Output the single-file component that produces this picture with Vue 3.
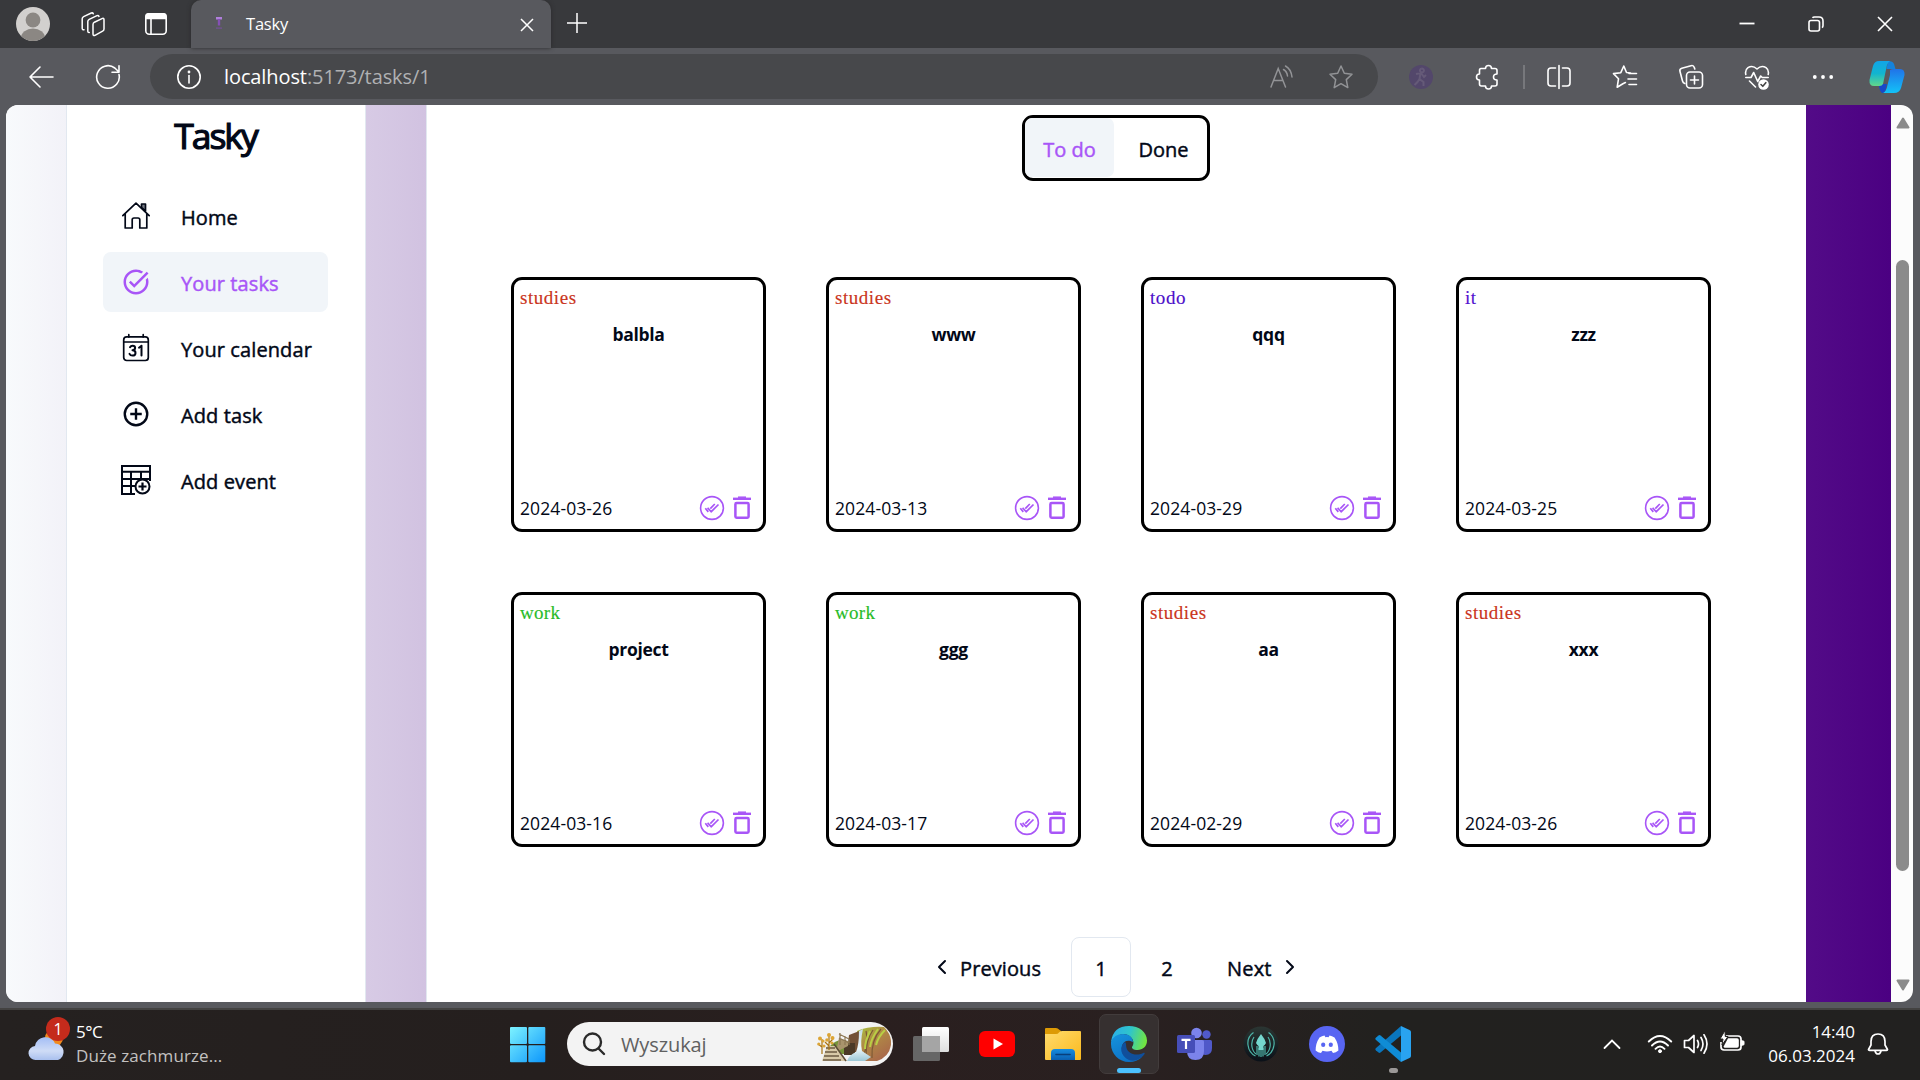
<script setup>
const nav = [
  { id: 'home', label: 'Home' },
  { id: 'tasks', label: 'Your tasks', active: true },
  { id: 'calendar', label: 'Your calendar' },
  { id: 'add', label: 'Add task' },
  { id: 'event', label: 'Add event' },
]

const tasks = [
  { category: 'studies', title: 'balbla', date: '2024-03-26' },
  { category: 'studies', title: 'www', date: '2024-03-13' },
  { category: 'todo', title: 'qqq', date: '2024-03-29' },
  { category: 'it', title: 'zzz', date: '2024-03-25' },
  { category: 'work', title: 'project', date: '2024-03-16' },
  { category: 'work', title: 'ggg', date: '2024-03-17' },
  { category: 'studies', title: 'aa', date: '2024-02-29' },
  { category: 'studies', title: 'xxx', date: '2024-03-26' },
]
</script>

<template>
  <div class="screen">
    <header class="tabstrip">
      <div class="strip-left">
        <svg class="avatar" width="34" height="34" viewBox="0 0 34 34">
          <defs><clipPath id="av"><circle cx="17" cy="17" r="17" /></clipPath></defs>
          <g clip-path="url(#av)">
            <rect width="34" height="34" fill="#d2d0ce" />
            <circle cx="17" cy="13" r="7.4" fill="#8b8783" />
            <ellipse cx="17" cy="31" rx="12" ry="9.5" fill="#8b8783" />
          </g>
        </svg>
        <svg class="workspaces" width="26" height="26" viewBox="0 0 26 26" fill="none" stroke="#fff" stroke-width="1.5" stroke-linejoin="round" stroke-linecap="round">
          <path d="M14.4 11.2 22 7.6q2-.8 2 1.2V18q0 1.5-1.400 2.200L15 24.300q-2 .8-2-1.200V13.500q0-1.600 1.400-2.300z" />
          <path d="M9.300 21.500q-1.500.3-1.500-1.500V10.500q0-1.500 1.400-2.200L17 4.600q1.500-.5 2 .8" />
          <path d="M4 18.800q-1.800.2-1.800-1.600V7.800q0-1.500 1.400-2.200L11.300 2q1.500-.5 2 .8" />
        </svg>
        <svg class="tabmenu" width="24" height="24" viewBox="0 0 24 24" fill="none" stroke="#fff" stroke-width="1.6">
          <rect x="1.800" y="1.800" width="20.400" height="20.400" rx="3.500" />
          <path d="M2 4q0-2.200 2.500-2.200h15Q22 1.800 22 4v2.500H2z" fill="#fff" />
          <path d="M7 7v15" />
        </svg>
      </div>
      <div class="tab">
        <svg class="favicon" width="8" height="14" viewBox="0 0 8 14">
          <path d="M1 1h6v2.500H1z" fill="#b07fdc" /><path d="M2.800 3h2.400v6.500H2.800z" fill="#8550b5" /><path d="M1 11.500h6v1.200H1z" fill="#76509a" />
        </svg>
        <span class="tab-title">Tasky</span>
        <svg class="tab-close" width="14" height="14" viewBox="0 0 14 14" stroke="#fff" stroke-width="1.500"><path d="M1 1l12 12M13 1L1 13" /></svg>
      </div>
      <svg class="newtab" width="22" height="22" viewBox="0 0 22 22" stroke="#fff" stroke-width="1.500"><path d="M11 1v20M1 11h20" /></svg>
      <div class="window-buttons">
        <svg width="16" height="16" viewBox="0 0 16 16" stroke="#fff" stroke-width="1.800"><path d="M.500 7.500h15" /></svg>
        <svg width="16" height="16" viewBox="0 0 16 16" fill="none" stroke="#fff" stroke-width="1.600"><rect x="1" y="4.500" width="10.500" height="10.500" rx="2" /><path d="M4.500 1.800Q5 1 6.500 1H11q4 0 4 4v4.500q0 1.500-1 2.200" /></svg>
        <svg width="16" height="16" viewBox="0 0 16 16" stroke="#fff" stroke-width="1.600"><path d="M1 1l14 14M15 1L1 15" /></svg>
      </div>
    </header>

    <div class="toolbar">
      <svg class="back" width="26" height="24" viewBox="0 0 26 24" fill="none" stroke="#fff" stroke-width="1.600" stroke-linecap="round" stroke-linejoin="round"><path d="M25 12H2M12 2L2 12l10 10" /></svg>
      <svg class="reload" width="26" height="26" viewBox="0 0 26 26" fill="none" stroke="#fff" stroke-width="1.600" stroke-linecap="round" stroke-linejoin="round"><path d="M24 10.500A11.300 11.300 0 1 1 19.800 4L23.500 7.500M24 1.800v6.500h-7" /></svg>
      <div class="address">
        <svg class="info" width="26" height="26" viewBox="0 0 26 26" fill="none" stroke="#fff" stroke-width="1.600"><circle cx="13" cy="13" r="11.200" /><path d="M13 11.500V19" stroke-linecap="round" /><circle cx="13" cy="8" r=".6" fill="#fff" /></svg>
        <span class="url"><b>localhost</b>:5173/tasks/1</span>
        <svg class="read" width="26" height="26" viewBox="0 0 26 26" fill="none" stroke="#929396" stroke-width="1.500" stroke-linecap="round"><path d="M2 23L9.200 4.500 16.500 23M4.700 16.500h9.200M14.500 5.500q3.500 2 4 6.500M16.500 2q5.500 3 6.500 11" /></svg>
        <svg class="star" width="26" height="26" viewBox="0 0 26 26" fill="none" stroke="#929396" stroke-width="1.500" stroke-linejoin="round"><path d="M13 2l3.300 7.300 7.700.9-5.700 5.400 1.500 8L13 19.700l-6.800 3.900 1.500-8L2 10.200l7.700-.9z" /></svg>
      </div>
      <div class="tools">
        <svg width="26" height="26" viewBox="0 0 26 26"><circle cx="13" cy="13" r="12" fill="#53476b" /><path d="M14 4.500a2 2 0 1 1-.1 0M8 10l5-1 3 4 2-2M12.500 9l-1 6 4 3v4M11.500 15l-2 3-3 3" stroke="#655a78" stroke-width="2" fill="none" /></svg>
        <svg class="puzzle" width="26" height="26" viewBox="0 0 26 26" fill="none" stroke="#fff" stroke-width="1.600" stroke-linejoin="round"><path d="M6 4.500h4.500q0-3 3-3t3 3H20q2 0 2 2V10q-3.500 0-3.500 3t3.500 3v4q0 2-2 2h-3.500q0 3-3 3t-3-3H6.500q-2 0-2-2v-4Q1.500 16 1.500 13t3-3V6.500q0-2 1.500-2z" /></svg>
        <i class="divider"></i>
        <svg width="26" height="26" viewBox="0 0 26 26" fill="none" stroke="#fff" stroke-width="1.600" stroke-linecap="round"><path d="M13 1.500v23M9.500 4H5Q2 4 2 7v12q0 3 3 3h4.500M16.500 4H21q3 0 3 3v12q0 3-3 3h-4.500" /></svg>
        <svg width="26" height="26" viewBox="0 0 26 26" fill="none" stroke="#fff" stroke-width="1.600" stroke-linecap="round" stroke-linejoin="round"><path d="M18.500 9l-4-.5L11.800 2 8.800 8.700 1.500 9.600l5 5.200-1.300 8.400 5.700-3.500 2.500-1.200M17 9.500h7.500M16 15h8.500M17 20.500h7.500" /></svg>
        <svg width="26" height="26" viewBox="0 0 26 26" fill="none" stroke="#fff" stroke-width="1.600" stroke-linecap="round" stroke-linejoin="round"><rect x="8.500" y="8" width="16" height="16" rx="3.500" /><path d="M16.500 12v8M12.500 16h8M6.800 19.500Q5 19 4.500 17L2 7.500Q1.300 5 3.800 4.200L13 1.700q2.500-.7 3.300 1.800l.5 1.500" /></svg>
        <svg width="26" height="26" viewBox="0 0 26 26" fill="none" stroke="#fff" stroke-width="1.600" stroke-linecap="round" stroke-linejoin="round"><path d="M1.800 10.500Q.8 6 4 3.700q4.500-3 9 1.300 4.500-4.300 9-1.300Q25.200 6 24.200 10.500M1.800 13.500H7l2.700-5 4 9 3-5.500 1.500 1.500h6M5.500 17l6 6" /><circle cx="19.500" cy="20.500" r="5.300" fill="#fff" stroke="none" /><path d="M17 20.500l1.800 1.800 3-3.600" stroke="#444" /></svg>
        <svg width="26" height="26" viewBox="0 0 26 26" fill="#fff"><circle cx="4.800" cy="13" r="1.900" /><circle cx="13" cy="13" r="1.900" /><circle cx="21.200" cy="13" r="1.900" /></svg>
        <svg class="copilot" width="36" height="34" viewBox="0 0 36 34">
          <defs>
            <linearGradient id="cp1" x1="0" y1="0" x2="0" y2="1"><stop offset="0" stop-color="#11a5e8" /><stop offset=".5" stop-color="#12b5cf" /><stop offset="1" stop-color="#62d78a" /></linearGradient>
            <linearGradient id="cp2" x1="0" y1="0" x2="0" y2="1"><stop offset="0" stop-color="#2173e8" /><stop offset="1" stop-color="#12c2f8" /></linearGradient>
          </defs>
          <path d="M21 10q1.500-1 4-1h6q5 0 4.500 6L32 28q-1.500 5-7 5H13q4-1 5-6l3-12z" fill="url(#cp2)" />
          <path d="M9.500 24h8.500l-1.500 6q-1 3-3.500 3-2.500-2-3.500-9z" fill="#1748c9" />
          <path d="M19 1q5 0 6 3l1.500 5h-9z" fill="#1583dc" />
          <path d="M10 1h11q-2 1-3 4l-4 19q-1 2-3.500 2H5q-5 0-4.500-6L4 6q1.500-5 6-5z" fill="url(#cp1)" />
        </svg>
      </div>
    </div>

    <div class="viewport">
      <div class="page">
        <aside class="sidebar">
          <h1>Tasky</h1>
          <nav>
            <a v-for="item in nav" :key="item.id" class="nav-item" :class="{ active: item.active }">
              <svg v-if="item.id === 'home'" width="30" height="30" viewBox="0 0 30 30" fill="none" stroke="currentColor" stroke-width="1.700" stroke-linecap="round" stroke-linejoin="round"><path d="M1.800 14.700L15 2.200l13.200 12.500M4.200 13v14h7v-8.200q0-1.800 1.800-1.800h4q1.800 0 1.800 1.800V27h7V13" /><path d="M20.500 3h4v7l-4-3.700z" fill="#777b84" /></svg>
              <svg v-else-if="item.id === 'tasks'" width="30" height="30" viewBox="0 0 24 24" fill="currentColor"><path d="M22 5.180L10.590 16.600l-4.240-4.240 1.410-1.410 2.830 2.830 10-10L22 5.180zM19.790 10.220c.13.570.21 1.170.21 1.780 0 4.420-3.580 8-8 8s-8-3.580-8-8 3.580-8 8-8c1.580 0 3.040.46 4.280 1.250l1.440-1.440A9.900 9.900 0 0 0 12 2C6.480 2 2 6.480 2 12s4.480 10 10 10 10-4.480 10-10c0-1.190-.22-2.330-.6-3.390l-1.610 1.610z" /></svg>
              <svg v-else-if="item.id === 'calendar'" width="30" height="30" viewBox="0 0 30 30" fill="none" stroke="currentColor" stroke-width="1.700" stroke-linecap="round" stroke-linejoin="round"><rect x="2.700" y="3.900" width="24.600" height="23.600" rx="3" /><path d="M3 9h24M7.800 1.700v2.200M22.200 1.700v2.200" /><g stroke-width="2"><path d="M9 14.200q.8-1.500 2.600-1.500 2.500 0 2.500 2.300 0 2-2.600 2.200 3 0 3 2.700t-3 2.700q-2.200 0-3-1.800M18 14.700l2.500-2v9.900" /></g></svg>
              <svg v-else-if="item.id === 'add'" width="30" height="30" viewBox="0 0 24 24" fill="none" stroke="currentColor" stroke-width="1.900"><circle cx="12" cy="12" r="9" /><path d="M12 7.400v9.200M7.400 12h9.200" /></svg>
              <svg v-else width="30" height="30" viewBox="0 0 30 30" fill="none" stroke="currentColor" stroke-width="2"><path d="M14 29H1V1h28v15M1 6.700h28M1 14h27M1 21h14M10 7v22M20 7v8" /><circle cx="21.500" cy="21.500" r="7" fill="#fff" /><path d="M21.500 17.500v8M17.500 21.500h8" stroke-width="2.200" /></svg>
              <span>{{ item.label }}</span>
            </a>
          </nav>
        </aside>

        <main class="main">
          <div class="toggle">
            <span class="toggle-on">To do</span>
            <span class="toggle-off">Done</span>
          </div>
          <section class="grid">
            <article v-for="(task, i) in tasks" :key="i" class="card">
              <span class="category" :class="task.category">{{ task.category }}</span>
              <h2>{{ task.title }}</h2>
              <footer>
                <time>{{ task.date }}</time>
                <svg width="26" height="26" viewBox="0 0 26 26" fill="none" stroke="#a855f7" stroke-width="1.600" stroke-linejoin="round"><circle cx="13" cy="13" r="11.400" /><path d="M8.600 12.800l3.500 4L19.500 9.500M6.300 13.200l3 3.700M11.300 13.700l4.500-4.700" stroke-width="1.700" /></svg>
                <svg class="trash" width="20" height="26" viewBox="0 0 20 26" fill="none" stroke="#a855f7"><path d="M1 3.800h18" stroke-width="2.400" /><path d="M6 2.200h8" stroke-width="1.500" /><rect x="3.400" y="8" width="13.200" height="14.800" rx="1.200" stroke-width="2.500" /></svg>
              </footer>
            </article>
          </section>
          <div class="pagination">
            <svg width="10" height="16" viewBox="0 0 10 16" fill="none" stroke="#020817" stroke-width="2" stroke-linecap="round" stroke-linejoin="round"><path d="M8 2L2 8l6 6" /></svg>
            <span class="prev">Previous</span>
            <span class="current">1</span>
            <span class="num">2</span>
            <span class="next">Next</span>
            <svg width="10" height="16" viewBox="0 0 10 16" fill="none" stroke="#020817" stroke-width="2" stroke-linecap="round" stroke-linejoin="round"><path d="M2 2l6 6-6 6" /></svg>
          </div>
        </main>
      </div>
      <div class="scrollbar">
        <svg width="14" height="12" viewBox="0 0 14 12"><path d="M7 1.500L12.500 10.500h-11z" fill="#8b8b8b" stroke="#8b8b8b" stroke-width="2" stroke-linejoin="round" /></svg>
        <div class="thumb"></div>
        <svg width="14" height="12" viewBox="0 0 14 12"><path d="M7 10.500L1.500 1.500h11z" fill="#8b8b8b" stroke="#8b8b8b" stroke-width="2" stroke-linejoin="round" /></svg>
      </div>
    </div>

    <div class="taskbar">
      <div class="weather">
        <div class="weather-icon">
          <svg width="38" height="36" viewBox="0 0 38 36">
            <defs><linearGradient id="cl" x1="0" y1="0" x2="0" y2="1"><stop offset="0" stop-color="#a3bdf5" /><stop offset=".6" stop-color="#cfdcf6" /><stop offset="1" stop-color="#a9c0ee" /></linearGradient></defs>
            <circle cx="26" cy="12" r="9" fill="#f08a1d" />
            <path d="M8 34a7 7 0 0 1-1-14 10.500 10.500 0 0 1 20-2.500A8.500 8.500 0 0 1 30 34z" fill="url(#cl)" />
          </svg>
          <span class="badge">1</span>
        </div>
        <div class="weather-text"><span>5°C</span><span class="dim">Duże zachmurze...</span></div>
      </div>

      <svg class="start" width="36" height="36" viewBox="0 0 36 36">
        <defs><linearGradient id="win" x1="0" y1="0" x2="1" y2="1"><stop offset="0" stop-color="#7df3ff" /><stop offset="1" stop-color="#0a94fb" /></linearGradient>
        <clipPath id="winc"><rect width="17" height="17" rx="1" /><rect x="18.300" width="17" height="17" rx="1" /><rect y="18.300" width="17" height="17" rx="1" /><rect x="18.300" y="18.300" width="17" height="17" rx="1" /></clipPath></defs>
        <rect width="36" height="36" fill="url(#win)" clip-path="url(#winc)" />
      </svg>

      <div class="search">
        <svg class="lens" width="24" height="24" viewBox="0 0 24 24" fill="none" stroke="#2a2a2a" stroke-width="2.400" stroke-linecap="round"><circle cx="10.500" cy="10" r="8.500" /><path d="M16.500 16.500L22 22" /></svg>
        <span>Wyszukaj</span>
        <svg class="scene" width="74" height="36" viewBox="0 0 74 36">
          <defs>
            <linearGradient id="rock" x1="0" y1="0" x2=".7" y2="1"><stop offset="0" stop-color="#a8c63a" /><stop offset=".45" stop-color="#b08a45" /><stop offset="1" stop-color="#a9674a" /></linearGradient>
            <linearGradient id="water" x1="0" y1="0" x2="0" y2="1"><stop offset="0" stop-color="#c5dce4" /><stop offset=".6" stop-color="#eef8fb" /><stop offset="1" stop-color="#9cc8d6" /></linearGradient>
          </defs>
          <path d="M40 5q12-5 27-4 8 8 7 18-2 12-14 16H44z" fill="url(#rock)" />
          <path d="M49 5q3 12-3 25M56 4q-7 10-7 26M64 3Q54 14 55 32" stroke="#7d5a35" stroke-width="1.200" fill="none" />
          <path d="M53 5q-5 10-5 18M61 3q-7 10-8 18M68 4q-7 7-9 15" stroke="#b9cf45" stroke-width="2" fill="none" />
          <path d="M32 9l13-5-3 22H30z" fill="#735236" />
          <path d="M13 20q8-9 19-4l2 12H14z" fill="#76943a" />
          <path d="M27 17h11v12H27z" fill="#4b3a27" />
          <path d="M42 5l4-2q-3 13-1 22l9 6-6 4H30q2-6 9-9 3-7 3-21z" fill="url(#water)" />
          <path d="M22 12l9 3v5L19 26z" fill="#a9946c" />
          <path d="M22 8l10 5M22 12l10 5M23 7v12M28 10v9M32 13v6" stroke="#8d7854" stroke-width="1.200" />
          <path d="M10 20h8l12 15H5z" fill="#d8c9a8" />
          <path d="M9 22h9M8 26h12M7 30h15M6 34h18" stroke="#6b5942" stroke-width="1.600" />
          <path d="M17 18l12 17" stroke="#5c4c38" stroke-width="1.500" />
          <path d="M5 28V13M12 24V9M5 21l-4-3M12 17l4-4M12 20l-4-4" stroke="#a87413" stroke-width="1.200" fill="none" />
          <g fill="#dca536"><circle cx="3" cy="12.500" r="2" /><circle cx="6" cy="15" r="1.600" /><circle cx="1.800" cy="18" r="1.600" /><circle cx="12" cy="9" r="2" /><circle cx="15.500" cy="12" r="2" /><circle cx="10" cy="14" r="1.800" /><circle cx="15" cy="17" r="1.600" /><circle cx="7" cy="20" r="1.600" /></g>
        </svg>
      </div>

      <div class="apps">
        <div class="app">
          <svg width="36" height="36" viewBox="0 0 36 36"><defs><linearGradient id="tv" x1="0" y1="0" x2="0" y2="1"><stop offset="0" stop-color="#fff" /><stop offset="1" stop-color="#dedede" /></linearGradient></defs><rect x="9" y="1" width="27" height="25" rx="1.500" fill="url(#tv)" /><rect x="0" y="10" width="27" height="25" rx="1.500" fill="#666" /><rect x="9" y="10" width="18" height="16" fill="#a5a5a5" /></svg>
        </div>
        <div class="app">
          <svg width="36" height="36" viewBox="0 0 36 36"><rect y="5" width="36" height="26" rx="6" fill="#f00" /><path d="M14.500 12.500v11l9.500-5.500z" fill="#fff" /></svg>
        </div>
        <div class="app">
          <svg width="36" height="36" viewBox="0 0 36 36"><defs><linearGradient id="fo" x1="0" y1="0" x2="1" y2="1"><stop offset="0" stop-color="#ffdb6d" /><stop offset="1" stop-color="#fbb91d" /></linearGradient><linearGradient id="fb" x1="0" y1="0" x2="0" y2="1"><stop offset="0" stop-color="#168de0" /><stop offset="1" stop-color="#0a5eb0" /></linearGradient></defs><path d="M0 3q0-1 1-1h10q2 0 3 1.500L16 5v5H0z" fill="#dd9a05" /><path d="M0 8h11q2 0 3-1.500T17 5h18q1 0 1 1v27q0 1-1 1H1q-1 0-1-1z" fill="url(#fo)" /><path d="M6 34v-7q0-4 4-4h16q4 0 4 4v7z" fill="url(#fb)" /><path d="M11 28.500h14" stroke="#083f7b" stroke-width="1.600" stroke-linecap="round" /></svg>
        </div>
        <div class="app selected">
          <svg width="36" height="36" viewBox="0 0 36 36">
            <defs>
              <linearGradient id="e1" x1="0" y1=".3" x2="1" y2=".5"><stop offset="0" stop-color="#2aaee8" /><stop offset=".5" stop-color="#2fc5cb" /><stop offset="1" stop-color="#73e63e" /></linearGradient>
              <linearGradient id="e2" x1="0" y1="0" x2=".6" y2="1"><stop offset="0" stop-color="#1694dd" /><stop offset="1" stop-color="#0c70c5" /></linearGradient>
            </defs>
            <path d="M0 16Q2 0 18 0c10 0 18 6 18 14.500 0 6-4.500 9.500-9.500 9.500-4 0-6-1.500-5.500-3 3-4 1-8.500-2.500-11Q10 4 0 16z" fill="url(#e1)" />
            <path d="M0 16Q3 8 12 8q9 0 10 8c-8-4-12 2-11 8 1 8 10 11 20 7Q26 36 18 36C8 36 0 28 0 18z" fill="url(#e2)" />
            <path d="M14 16c-6 4-5 14 4 18 6 2 12-1 15.500-6 .5-1-.3-1.500-1.200-1-8 3.500-15 .5-16.800-5-.8-3 0-5-1.500-6z" fill="#104f9b" />
          </svg>
          <i class="running wide"></i>
        </div>
        <div class="app">
          <svg width="36" height="36" viewBox="0 0 36 36"><circle cx="29.500" cy="8.500" r="4.200" fill="#5059c9" /><circle cx="19.500" cy="7" r="5.300" fill="#7b83eb" /><path d="M26 14h7.500q1.500 0 1.500 1.500V22q0 7-6.500 7-3 0-4.500-2z" fill="#5059c9" /><path d="M10 14h15.500q1.500 0 1.500 1.500V25q0 9-8.500 9Q10 34 10 25z" fill="#7b83eb" /><rect y="9" width="18" height="18" rx="1.500" fill="#464eb8" /><path d="M4.500 13.800h9M9 13.800V23" stroke="#fff" stroke-width="2.200" /></svg>
        </div>
        <div class="app">
          <svg width="36" height="36" viewBox="0 0 36 36" fill="none"><defs><linearGradient id="gk" x1="0" y1="0" x2="0" y2="1"><stop offset="0" stop-color="#2b3633" /><stop offset="1" stop-color="#0a1018" /></linearGradient></defs><circle cx="18" cy="18" r="17.500" fill="url(#gk)" /><g stroke="#4eb5a9" stroke-width="1.200"><path d="M10.500 6.500Q4 11 5 19q1 8 7.500 11M11 11q-3 4-2 10 1 5 4 7M25.500 6.500Q32 11 31 19q-1 8-7.500 11M25 11q3 4 2 10-1 5-4 7M16 22v8.500M18 23v8M20 22v8.500" /><path d="M14 20v9M22 20v9" /></g><path d="M18 8q4 5 5 9-1 2-2.500 3v4h-5v-4q-1.500-1-2.500-3 1-4 5-9z" fill="#75d7ce" /></svg>
        </div>
        <div class="app">
          <svg width="36" height="36" viewBox="0 0 36 36"><circle cx="18" cy="18" r="18" fill="#5865f2" /><path d="M10.500 11.500Q13 10 15.500 9.500l.9 1.700q1.600-.2 3.200 0l.9-1.700q2.500.5 5 2 4 6 3.900 13-2.500 2-5.400 2.500l-1.500-2.200q-4.500 1.200-9 0L12 27q-3-.5-5.400-2.500-.1-7 3.900-13z" fill="#fff" /><ellipse cx="14.200" cy="18.700" rx="2.100" ry="2.300" fill="#5865f2" /><ellipse cx="21.800" cy="18.700" rx="2.100" ry="2.300" fill="#5865f2" /></svg>
        </div>
        <div class="app">
          <svg width="36" height="36" viewBox="0 0 36 36"><path d="M26 0v9.500L5.500 26.500q-1 .8-2 0L.8 24.200q-.9-.9 0-2z" fill="#0a76bd" /><path d="M26 36v-9.500L5.500 9.500q-1-.8-2 0L.8 11.800q-.9.9 0 2z" fill="#0f8cd6" /><path d="M26 0l8.500 4Q36 4.700 36 6v24q0 1.300-1.500 2L26 36z" fill="#29a3f0" /></svg>
          <i class="running"></i>
        </div>
      </div>

      <div class="tray">
        <svg class="chev" width="18" height="12" viewBox="0 0 18 12" fill="none" stroke="#fff" stroke-width="1.800" stroke-linecap="round"><path d="M1.500 10L9 2.500l7.500 7.500" /></svg>
        <svg class="wifi" width="26" height="20" viewBox="0 0 26 20" fill="none" stroke="#fff" stroke-width="1.900" stroke-linecap="round"><path d="M1.800 7.500q11.200-11 22.400 0M5 11.500q8-8 16 0M8.500 14.800q4.500-4.500 9 0" /><circle cx="13" cy="17.200" r="1.500" fill="#fff" stroke-width="1" /></svg>
        <svg class="sound" width="26" height="22" viewBox="0 0 26 22" fill="none" stroke="#fff" stroke-width="1.700" stroke-linecap="round" stroke-linejoin="round"><path d="M1.500 7.500h4L11 2.500v17l-5.500-5h-4zM14.500 7.500q2 3.500 0 7M18 4.500q4 6.500 0 13M21 1.800q6 9.200 0 18.400" /></svg>
        <svg class="battery" width="26" height="22" viewBox="0 0 26 22"><path d="M7 5h12q3 0 3 3v8q0 3-3 3H5q-3 0-3-3v-5" fill="none" stroke="#fff" stroke-width="1.700" /><path d="M9 7.300h9q1.800 0 1.800 1.700v6q0 1.700-1.800 1.700H5.500l-1-1z" fill="#fff" /><path d="M22 9.500l3 .8v3.400l-3 .8z" fill="#fff" stroke="#fff" /><path d="M6-.5L1 8h3l-1 6 6-8.500H6.300z" fill="#fff" stroke="#242221" /></svg>
        <div class="clock"><span>14:40</span><span>06.03.2024</span></div>
        <svg class="bell" width="22" height="24" viewBox="0 0 22 24" fill="none" stroke="#fff" stroke-width="1.700" stroke-linejoin="round"><path d="M4 13V9.500q0-7.500 7-7.500t7 7.500V13l2.500 4.500q0 .8-1 .8h-17q-1 0-1-.8zM8 19q.8 3 3 3t3-3" /></svg>
      </div>
    </div>
  </div>
</template>

<style>
body { margin: 0; overflow: hidden; }
</style>

<style scoped>
* { box-sizing: border-box; }
svg { display: block; flex: none; }
.screen {
  width: 1920px; height: 1080px; overflow: hidden;
  display: flex; flex-direction: column;
  background: #58595e; color: #fff;
  font-family: "Open Sans", "Noto Sans", sans-serif;
}

/* browser chrome */
.tabstrip { height: 48px; background: #38393c; display: flex; align-items: center; flex: none; }
.strip-left { width: 191px; display: flex; align-items: center; flex: none; }
.avatar { margin-left: 16px; }
.workspaces { margin-left: 30px; }
.tabmenu { margin-left: 38px; }
.tab { width: 360px; height: 48px; background: #58595e; border-radius: 10px 10px 0 0; display: flex; align-items: center; flex: none; box-shadow: 0 0 4px #2a2a2c; }
.favicon { margin: 0 23px 3px 24px; }
.tab-title { font-size: 16.5px; letter-spacing: -.2px; flex: 1; line-height: 24px; }
.tab-close { margin: 2px 17px 0 0; }
.newtab { margin-left: 15px; margin-bottom: 2px; }
.window-buttons { margin-left: auto; margin-right: 27px; display: flex; gap: 53px; }

.toolbar { height: 57px; display: flex; align-items: center; flex: none; }
.back { margin-left: 28px; }
.reload { margin-left: 41px; }
.address { margin-left: 29px; width: 1228px; height: 45px; border-radius: 23px; background: #47484b; display: flex; align-items: center; flex: none; }
.info { margin-left: 26px; }
.url { margin-left: 22px; flex: 1; font-size: 20px; color: #b0b1b3; letter-spacing: -.1px; line-height: 28px; }
.url b { font-weight: 400; color: #fff; }
.read { margin-right: 33px; }
.star { margin-right: 24px; }
.tools { display: flex; align-items: center; margin-left: 30px; gap: 40px; }
.puzzle { margin: 0 -1px 0 1px; }
.divider { width: 2px; height: 24px; background: #77787c; margin: 0 -19px 0 -17px; }
.copilot { margin-left: -7px; }

/* page viewport */
.viewport { margin-left: 6px; width: 1907px; height: 897px; border-radius: 12px; overflow: hidden; display: flex; background: #fcfcfc; flex: none; }
.page { width: 1885px; height: 897px; background: linear-gradient(90deg, #f8fafc, #4b0082); display: flex; color: #020817; }
.sidebar { margin-left: 60px; width: 300px; background: #fff; border: solid #e2e8f0; border-width: 0 1px; display: flex; flex-direction: column; flex: none; }
h1 { margin: 4px 0 0; font-size: 35.500px; line-height: 52px; font-weight: 400; text-align: center; letter-spacing: -2px; padding-right: 1px; -webkit-text-stroke: 1.200px currentColor; }
nav { margin: 25px 37px 0 36px; display: flex; flex-direction: column; gap: 6px; }
.nav-item { height: 60px; border-radius: 8px; display: flex; align-items: center; padding-left: 18px; font-size: 20px; letter-spacing: .1px; -webkit-text-stroke: .45px currentColor; }
.nav-item svg { margin-bottom: 1px; }
.nav-item span { margin-left: 30px; line-height: 28px; padding-top: 3px; white-space: nowrap; }
.nav-item.active { background: #f1f5f9; color: #a855f7; }

.main { margin-left: 60px; width: 1380px; background: #fff; border-left: 1px solid #e2e8f0; display: flex; flex-direction: column; flex: none; }
.toggle { margin: 10px 0 0 595px; width: 188px; height: 66px; border: 3px solid #000; border-radius: 11px; display: flex; font-size: 20px; line-height: 63px; -webkit-text-stroke: .45px currentColor; }
.toggle span { text-align: center; }
.toggle-on { width: 89px; height: 59px; background: #f1f5f9; color: #a855f7; border-radius: 7px; }
.toggle-off { flex: 1; padding-left: 6px; }
.grid { margin: 96px 0 0 84px; display: grid; grid-template-columns: repeat(4, 255px); gap: 60px; }
.card { height: 255px; border: 3px solid #000; border-radius: 11px; padding: 5px 5px 3px 6px; display: flex; flex-direction: column; }
.category { font: 19px/25px "Liberation Serif", serif; letter-spacing: .55px; -webkit-text-stroke: .15px currentColor; }
.studies { color: #ca3521; }
.todo { color: #4b0ec9; }
.it { color: #5313d0; }
.work { color: #28bb28; letter-spacing: .3px; }
h2 { margin: 12px 1px 0 0; font-size: 17.500px; line-height: 24px; font-weight: 700; text-align: center; letter-spacing: -.3px; }
.card footer { margin-top: auto; height: 40px; display: flex; align-items: center; }
.card footer svg { margin-top: 3px; }
time { font-size: 17.500px; flex: 1; line-height: 24px; padding-top: 3px; letter-spacing: .1px; }
.trash { margin: 0 6px 0 7px; }
.pagination { margin: 90px 0 0 510px; height: 60px; display: flex; align-items: center; font-size: 20px; line-height: 28px; -webkit-text-stroke: .45px currentColor; }
.pagination svg { margin-bottom: 1px; }
.pagination span { padding-top: 3px; }
.prev { margin-left: 13px; width: 111px; letter-spacing: .1px; }
.current { width: 60px; height: 60px; border: 1px solid #e2e8f0; border-radius: 8px; text-align: center; line-height: 56px; }
.num { width: 72px; text-align: center; }
.next { margin-left: 24px; width: 58px; letter-spacing: .2px; }

.scrollbar { width: 22px; display: flex; flex-direction: column; align-items: center; padding: 12px 0 11px 1px; }
.thumb { width: 13px; height: 611px; border-radius: 7px; background: #8b8b8b; margin: 131px 0 auto; }

/* taskbar */
.taskbar { margin-top: 6px; height: 72px; border-top: 2px solid #434241; background: linear-gradient(90deg, #252120 0, #251f1e 28%, #2a1f1f 45%, #292020 60%, #22211f 72%, #222120 100%); display: flex; flex: none; }
.weather { width: 510px; display: flex; flex: none; padding: 14px 0 0 28px; }
.weather-icon { position: relative; width: 38px; height: 40px; }
.weather-icon svg { margin-top: 2px; }
.badge { position: absolute; left: 18px; top: -7px; width: 24px; height: 24px; border-radius: 12px; background: #c42b1c; font-size: 16px; line-height: 24px; text-align: center; }
.weather-text { margin: -4px 0 0 10px; display: flex; flex-direction: column; font-size: 17px; line-height: 24px; letter-spacing: .1px; }
.weather-text span:first-child { letter-spacing: -.5px; }
.dim { color: #c3c1c0; }
.start { margin-top: 17px; }
.search { margin: 12px 0 0 21px; width: 326px; height: 44px; border-radius: 22px; background: #f3f3f3; display: flex; align-items: center; flex: none; }
.lens { margin-left: 15px; }
.search span { margin-left: 15px; flex: 1; color: #606060; font-size: 20px; line-height: 28px; letter-spacing: -.1px; padding-top: 2px; }
.scene { margin-right: 2px; }
.apps { margin: 4px 0 0 8px; display: flex; gap: 6px; }
.app { width: 60px; height: 60px; border-radius: 7px; display: flex; justify-content: center; padding-top: 12px; position: relative; flex: none; }
.app.selected { background: #363030; border: 1px solid #423c3c; padding-top: 11px; }
.running { position: absolute; bottom: 1px; width: 9px; height: 5px; border-radius: 3px; background: #9b9897; }
.running.wide { width: 24px; bottom: 0; background: #4cc2ff; }
.tray { margin-left: auto; margin-right: 31px; display: flex; align-items: center; padding-bottom: 3px; }
.wifi { margin-left: 26px; }
.sound { margin-left: 10px; }
.battery { margin-left: 10px; margin-bottom: 3px; }
.clock { width: 110px; display: flex; flex-direction: column; text-align: right; font-size: 17px; line-height: 24px; }
.bell { margin-left: 12px; }
</style>
